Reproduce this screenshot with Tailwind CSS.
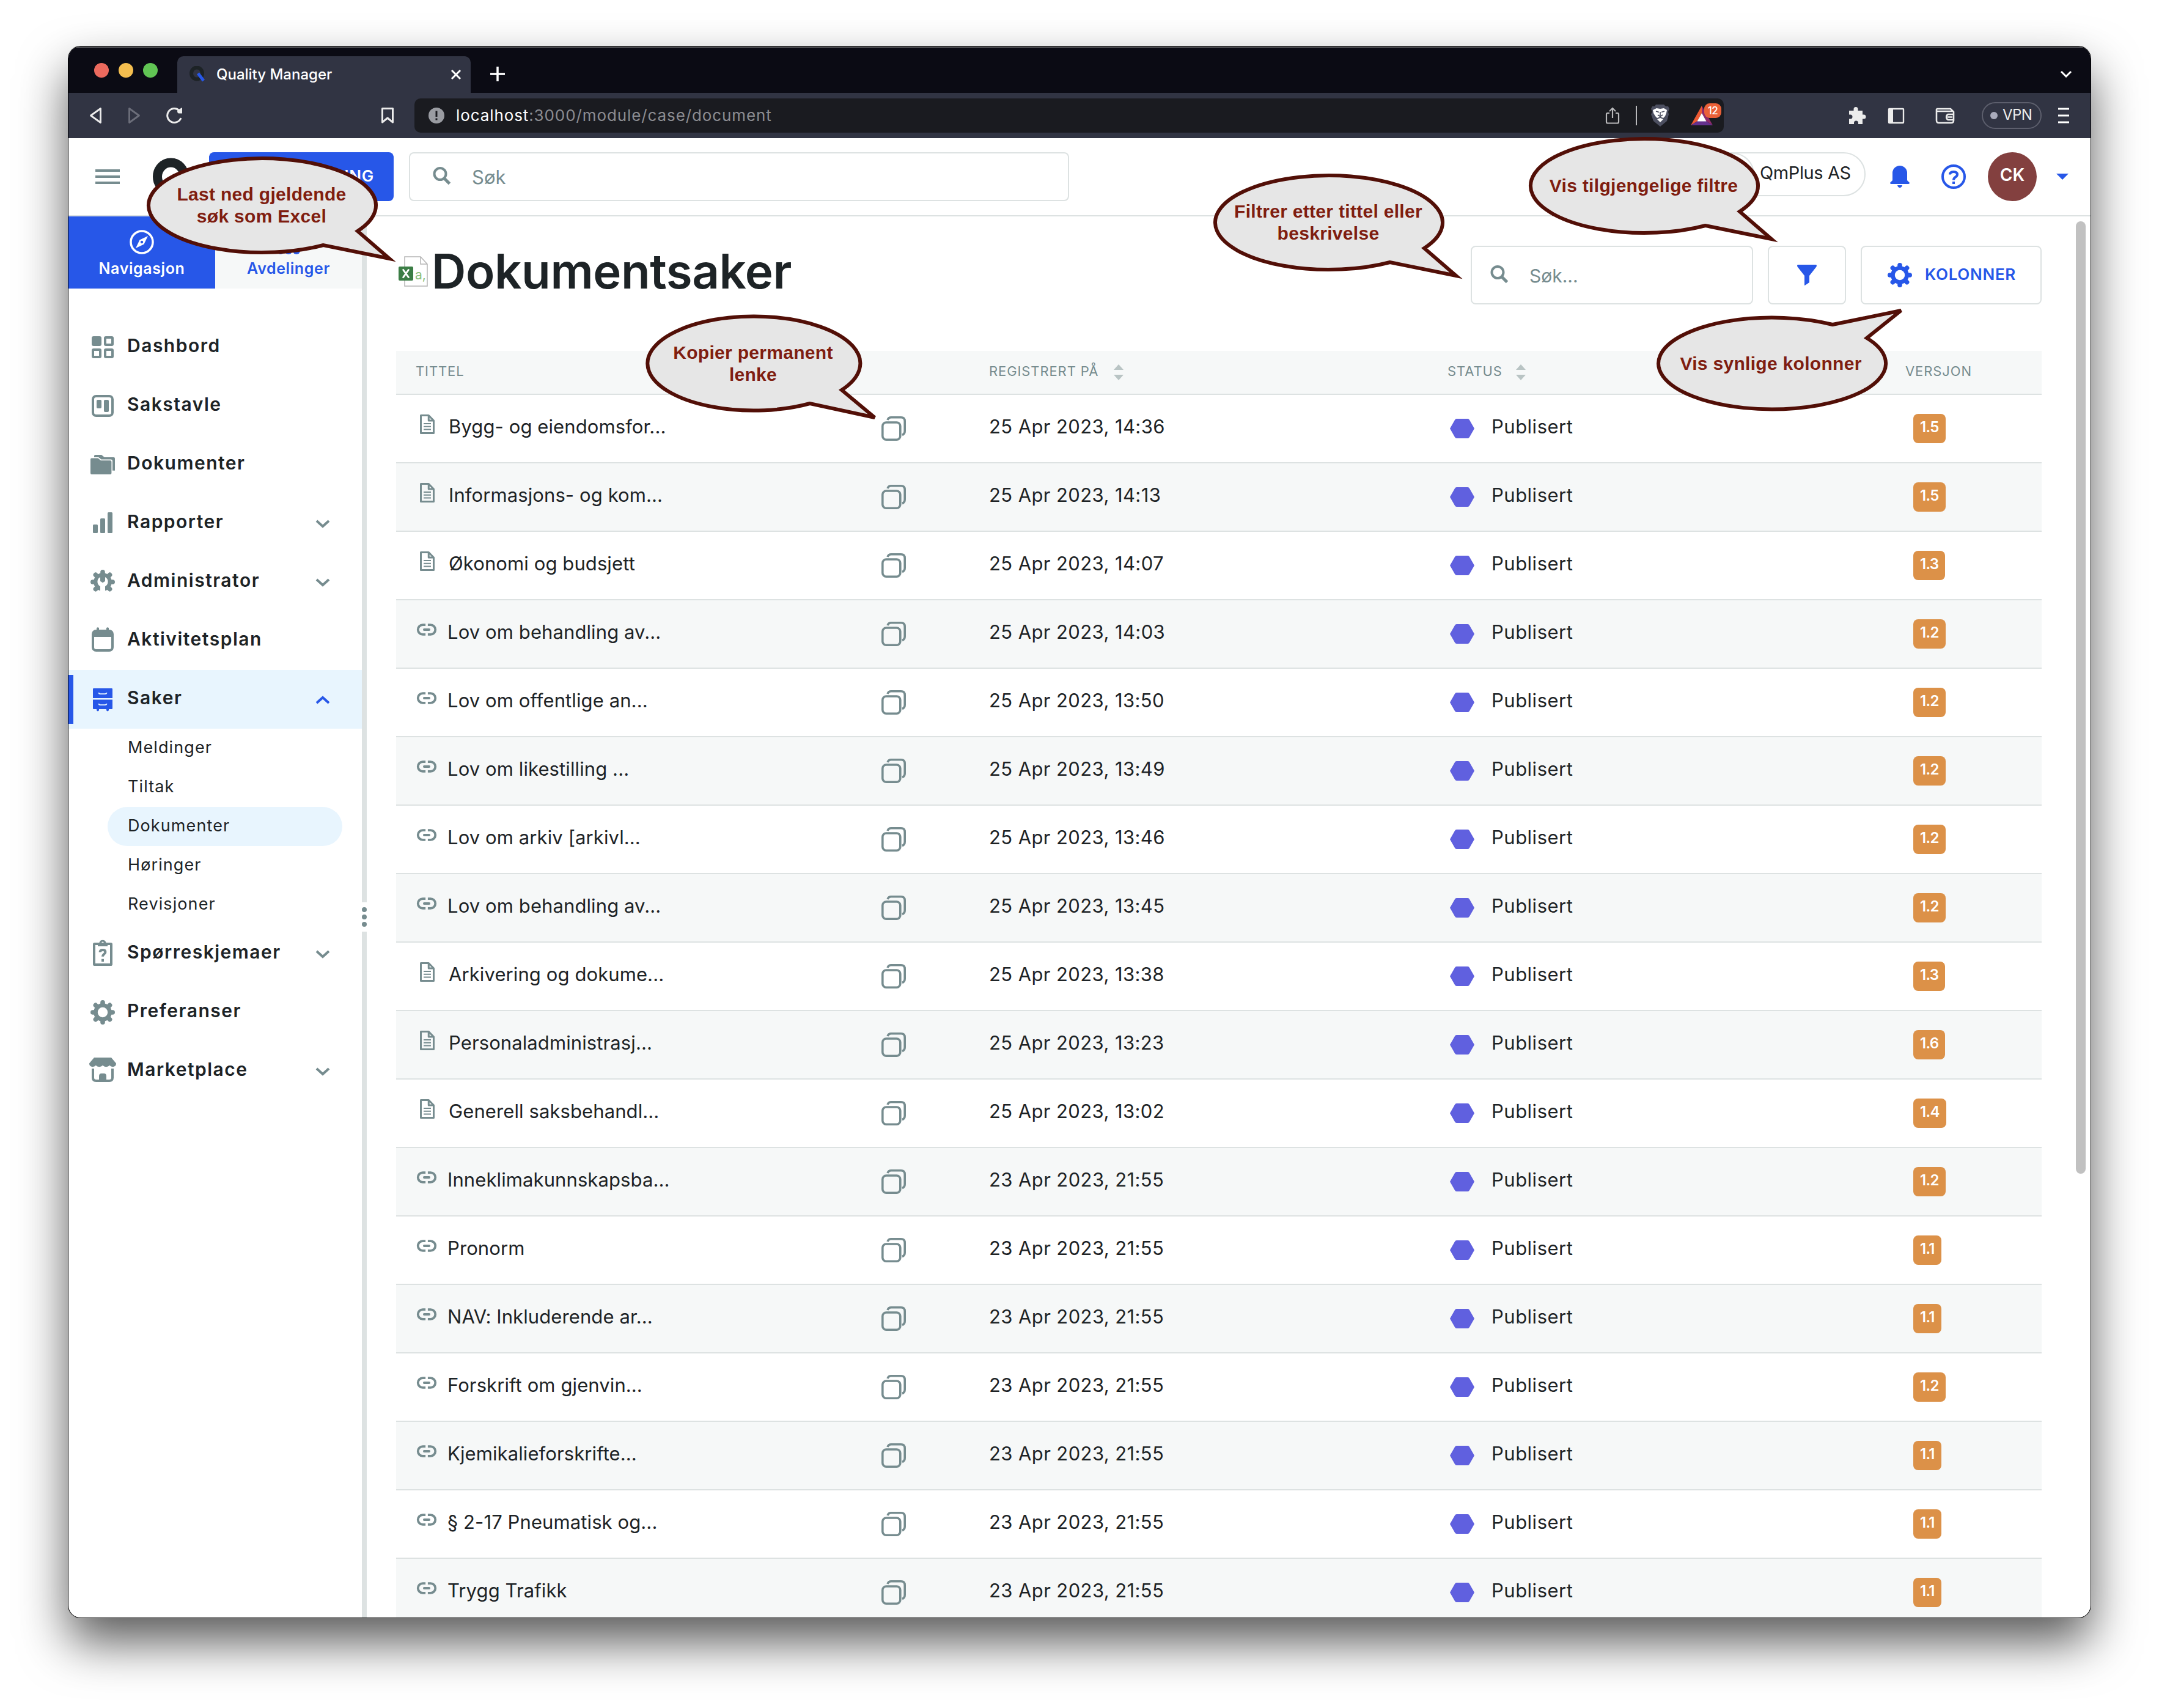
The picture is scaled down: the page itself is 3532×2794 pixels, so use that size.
<!DOCTYPE html>
<html lang="no">
<head>
  <meta charset="UTF-8" />
  <meta name="viewport" content="width=device-width, initial-scale=1.0"/>
  <title>Quality Manager</title>
  <script src="https://cdn.jsdelivr.net/npm/@tailwindcss/browser@4"></script>
</head>
<body class="bg-white font-['Inter',sans-serif] text-[#1d2326]">
  <!-- Icons -->
  <svg class="absolute size-0">
    <mask id="gearHole" maskUnits="userSpaceOnUse" x="0" y="0" width="24" height="24"><rect width="24" height="24" fill="white"/><circle cx="12" cy="12" r="4.1" fill="black"/></mask>
    <mask id="wrenchHole" maskUnits="userSpaceOnUse" x="0" y="0" width="24" height="24">
      <rect width="24" height="24" fill="white"/>
      <path d="M10 24V15.6A4.3 4.3 0 0 1 10 8V11.400L12 12.600L14 11.400V8A4.300 4.300 0 0 1 14 15.600V24Z" fill="black"/>
    </mask>
    <symbol id="gear" viewBox="0 0 24 24">
      <g mask="url(#gearHole)">
        <circle cx="12" cy="12" r="7.400" fill="currentColor"/>
        <path d="M12 3.900V20.100M3.900 12H20.100M6.200 6.200L17.800 17.800M17.800 6.200L6.200 17.800" stroke="currentColor" stroke-width="3.800" stroke-linecap="round"/>
      </g>
    </symbol>
    <symbol id="admin" viewBox="0 0 24 24">
      <g mask="url(#wrenchHole)">
        <circle cx="12" cy="12" r="7.400" fill="currentColor"/>
        <path d="M12 3.900V12M3.900 12H20.100M6.200 6.200L17.800 17.800M17.800 6.200L6.200 17.800" stroke="currentColor" stroke-width="3.800" stroke-linecap="round"/>
      </g>
    </symbol>
    <symbol id="dashboard" viewBox="0 0 24 24">
      <rect x="3" y="3" width="8" height="8" rx="1.6" fill="currentColor"/>
      <g fill="none" stroke="currentColor" stroke-width="2"><rect x="14" y="4" width="6" height="6" rx=".6"/><rect x="4" y="14" width="6" height="6" rx=".6"/><rect x="14" y="14" width="6" height="6" rx=".6"/></g>
    </symbol>
    <symbol id="board" viewBox="0 0 24 24">
      <rect x="4" y="4" width="16" height="16" rx="2.6" fill="none" stroke="currentColor" stroke-width="2"/>
      <rect x="7" y="7" width="4" height="7" rx="1" fill="currentColor"/><rect x="13" y="7" width="4" height="10" rx="1" fill="currentColor"/>
    </symbol>
    <symbol id="folders" viewBox="0 0 24 24" fill="currentColor">
      <path d="M3 6.8H8.2L10.4 8.6H18.2Q19.2 8.6 19.2 9.6V19Q19.2 20 18.2 20H3Q2 20 2 19V7.8Q2 6.8 3 6.8Z"/>
      <path d="M5 6V5Q5 4 6 4H11L13.4 6H21Q22 6 22 7V16.9H20V9.2Q20 7.8 18.6 7.8H10.8L8.6 6Z"/>
    </symbol>
    <symbol id="chart" viewBox="0 0 24 24" fill="currentColor"><rect x="4" y="13" width="4" height="7" rx=".8"/><rect x="10" y="8" width="4" height="12" rx=".8"/><rect x="16" y="3" width="4" height="17" rx=".8"/></symbol>
    <symbol id="calendar" viewBox="0 0 24 24">
      <rect x="4" y="4" width="16" height="16" rx="2.6" fill="none" stroke="currentColor" stroke-width="2"/>
      <path d="M4 4H20V9H4ZM7 1.6Q8 .6 9 1.6V4H7ZM15 1.6Q16 .6 17 1.6V4H15Z" fill="currentColor"/>
    </symbol>
    <symbol id="drawers" viewBox="0 0 24 24">
      <path d="M4.6 3H19.4Q20 3 20 3.6V11H4V3.6Q4 3 4.6 3ZM4 12.2H20V19.4Q20 20 19.4 20H17V21Q16 22.4 15 21V20H9V21Q8 22.4 7 21V20H4.6Q4 20 4 19.4Z" fill="currentColor"/>
      <path d="M8.6 6.6Q9 7.6 10 7.6H14Q15 7.6 15.4 6.6M8.6 15.6Q9 16.6 10 16.6H14Q15 16.6 15.4 15.6" fill="none" stroke="#e8f5fe" stroke-width=".9"/>
    </symbol>
    <symbol id="clipboard" viewBox="0 0 24 24">
      <rect x="5" y="4" width="14" height="17" rx=".4" fill="none" stroke="currentColor" stroke-width="2"/>
      <path d="M8 3H9.2A2.9 2.9 0 0 1 14.8 3H16V6H8ZM12 2.2A.9.9 0 1 0 12 4A.9.9 0 1 0 12 2.2Z" fill="currentColor" fill-rule="evenodd"/>
      <path d="M9.8 10.8Q9.8 9 12 9T14.2 10.7C14.2 12.3 12 12.2 12 14.4M12 16.4V18.6" fill="none" stroke="currentColor" stroke-width="2"/>
    </symbol>
    <symbol id="store" viewBox="0 0 24 24">
      <path d="M5 1H19L23 5.8Q23 8.4 20.4 8.6Q18.6 8.6 17.6 7.4Q16.6 8.6 14.8 8.6Q13 8.6 12 7.4Q11 8.6 9.2 8.6Q7.4 8.6 6.4 7.4Q5.4 8.6 3.6 8.6Q1 8.4 1 5.8Z" fill="currentColor"/>
      <path d="M4 10V17.4Q4 20 6.600 20H17.4Q20 20 20 17.4V10" fill="none" stroke="currentColor" stroke-width="2"/>
      <path d="M9 20V16.2Q9 14 11 14H13Q15 14 15 16.2V20Z" fill="currentColor"/>
    </symbol>
    <symbol id="chevron" viewBox="0 0 24 16"><path d="M2 3L12 12L22 3" fill="none" stroke="currentColor" stroke-width="4"/></symbol>
    <symbol id="doc" viewBox="0 0 24 24">
      <path d="M5 2.3H13.5L19 8V21.7H5ZM13.5 2.3V8H19" fill="none" stroke="currentColor" stroke-width="2" stroke-linejoin="round"/>
      <path d="M8 11.3H16M8 14.5H16M8 17.7H16" stroke="currentColor" stroke-width="1.4"/>
    </symbol>
    <symbol id="link" viewBox="0 0 24 24">
      <path d="M10.8 7H8A5 5 0 0 0 8 17H10.8M13.2 7H16A5 5 0 0 1 16 17H13.2" fill="none" stroke="currentColor" stroke-width="2.4"/>
      <path d="M9.4 12H14.6" stroke="currentColor" stroke-width="2.4" stroke-linecap="round"/>
    </symbol>
    <symbol id="copy" viewBox="0 0 40 40">
      <rect x="1.8" y="10" width="29" height="28.2" rx="6" fill="none" stroke="currentColor" stroke-width="3.6"/>
      <path d="M10 6Q11.5 1.8 16 1.8H32Q38.2 1.8 38.2 8V24Q38.2 29 34 30.5" fill="none" stroke="currentColor" stroke-width="3.6"/>
    </symbol>
    <symbol id="search" viewBox="0 0 30 30">
      <circle cx="12" cy="11.5" r="9.5" fill="none" stroke="currentColor" stroke-width="4"/>
      <path d="M18.5 18.5L27.5 27.5" stroke="currentColor" stroke-width="5"/>
    </symbol>
    <symbol id="sort" viewBox="0 0 16 26"><path d="M8 0L16 9H0ZM8 26L0 17H16Z" fill="#b9c4c4"/></symbol>
  </svg>

  <div class="relative w-[3532px] h-[2794px] overflow-hidden pt-[76px] pl-[112px]">
    <div class="flex flex-col w-[3308px] h-[2570px] rounded-[20px] overflow-hidden bg-white ring-1 ring-black shadow-[0_40px_80px_rgba(0,0,0,0.65)]">

      <!-- Tab bar -->
      <div class="flex items-center shrink-0 h-[76px] bg-[#0b0b14] pl-[42px] border-t-2 border-[#5c5c60]">
        <div class="flex gap-4">
          <div class="size-6 rounded-full bg-[#ec6a5e]"></div>
          <div class="size-6 rounded-full bg-[#f4be4f]"></div>
          <div class="size-6 rounded-full bg-[#61c554]"></div>
        </div>
        <div class="flex items-center self-end w-[480px] h-[60px] ml-8 pl-5 pr-3 bg-[#313443] rounded-t-[10px] text-white">
          <svg class="w-[26px] h-[28px]" viewBox="0 0 26 28"><ellipse cx="12" cy="12" rx="9" ry="9.5" fill="none" stroke="#1d2326" stroke-width="6"/><path d="M14 12L23 24" stroke="#2757e8" stroke-width="5"/></svg>
          <span class="ml-[18px] text-[24px] font-medium">Quality Manager</span>
          <svg class="ml-auto size-6" viewBox="0 0 24 24"><path d="M5 5L19 19M19 5L5 19" stroke="white" stroke-width="3"/></svg>
        </div>
        <svg class="ml-8 mt-3 size-6" viewBox="0 0 24 24"><path d="M12 0V24M0 12H24" stroke="white" stroke-width="3.5"/></svg>
        <svg class="ml-auto mr-[30px] mt-3 w-5 h-3" viewBox="0 0 20 12"><path d="M2 2L10 10L18 2" fill="none" stroke="white" stroke-width="3"/></svg>
      </div>

      <!-- Address bar -->
      <div class="flex items-center shrink-0 h-[74px] bg-[#313443] pl-[31px] text-[#ececec]">
        <svg class="size-7" viewBox="0 0 28 28"><path d="M21.5 2.5V25.5L5.5 14Z" fill="none" stroke="currentColor" stroke-width="2.8" stroke-linejoin="round"/></svg>
        <svg class="ml-[35px] size-7 text-[#6c6e7a]" viewBox="0 0 28 28"><path d="M5.5 2.5V25.5L21.5 14Z" fill="none" stroke="currentColor" stroke-width="2.8" stroke-linejoin="round"/></svg>
        <svg class="ml-[37px] size-7" viewBox="0 0 28 28"><path d="M25 18A11.5 11.5 0 1 1 22 5.5" fill="none" stroke="currentColor" stroke-width="3"/><path d="M27 1V10.5H21Q18 9 19.500 5Z" fill="currentColor"/></svg>
        <svg class="ml-[321px] size-7" viewBox="0 0 28 28"><path d="M5.5 2.5H22.5V25L14 18L5.5 25Z" fill="none" stroke="currentColor" stroke-width="3" stroke-linejoin="round"/></svg>
        <div class="flex items-center w-[2142px] h-[56px] ml-[30px] pl-[23px] pr-[18px] bg-[#1a1b20] rounded-[10px]">
          <svg class="size-[26px]" viewBox="0 0 26 26"><circle cx="13" cy="13" r="13" fill="#9a9ca2"/><path d="M13 5.5V15M13 17.5V20.5" stroke="#1a1b20" stroke-width="3"/></svg>
          <span class="ml-[19px] mb-[2px] text-[26px] tracking-[0.9px] text-[#8b8c91]"><span class="text-white">localhost</span>:3000/module/case/document</span>
          <svg class="ml-auto size-7" viewBox="0 0 28 28"><path d="M9 10H6Q4 10 4 12V24.5Q4 26.5 6 26.5H22Q24 26.5 24 24.5V12Q24 10 22 10H19M14 18V2M9 7L14 2L19 7" fill="none" stroke="#b9b9bb" stroke-width="2.2"/></svg>
          <div class="ml-6 w-[2px] h-8 bg-[#b9b9bb]"></div>
          <svg class="ml-[22px] w-8 h-9" viewBox="0 0 32 36">
            <path d="M9 0H22L25 3H29L31 7L29 12L30 16L27 27L16 36L5 27L1 16L3 12L1 7L3 3H7Z" fill="#4c4f60"/>
            <path d="M10 6L16 7L22 6L27 9L26 14L24 19L21 22L16 20L11 22L8 19L5 14L4 9Z" fill="white"/>
            <path d="M9 11L14 12.5M23 11L18 12.5M16 12V18M12 17L16 19.5L20 17" stroke="#4c4f60" stroke-width="1.6" fill="none"/>
            <path d="M11 24L16 22L21 24L16 29Z" fill="white"/>
          </svg>
          <div class="relative ml-[34px]">
            <svg class="w-9 h-8" viewBox="0 0 36 32"><path d="M18 0L0 32L11 25L18 12Z" fill="#ed5a33"/><path d="M18 0L36 32L25 25L18 12Z" fill="#902a6b"/><path d="M0 32H36L25 25H11Z" fill="#65318e"/><path d="M18 12L25.5 25.5H10.5Z" fill="white"/></svg>
            <div class="absolute left-[22px] top-[-4px] w-7 h-6 rounded-[9px] bg-[#ea6038] text-white text-[17px] leading-6 font-medium text-center tracking-[-0.5px]">12</div>
          </div>
        </div>
        <svg class="ml-[204px] w-[30px] h-[30px]" viewBox="0 0 30 30"><path d="M1 7H8.5V4.5A3.5 3.5 0 0 1 15.5 4.5V7H23V13.5H25A3.5 3.5 0 0 1 25 20.5H23V29H16V27A3.5 3.5 0 0 0 9 27V29H1V20.5H3A3.5 3.5 0 0 0 3 13.5H1Z" fill="currentColor"/></svg>
        <svg class="ml-[34px] size-7" viewBox="0 0 28 28"><rect x="2" y="3" width="24" height="23" rx="1" fill="none" stroke="currentColor" stroke-width="2.4"/><rect x="2" y="3" width="7" height="23" fill="currentColor"/></svg>
        <svg class="ml-[50px] w-8 h-7" viewBox="0 0 32 28"><path d="M3 3H25L30 8V22Q30 26 26 26H6Q2 26 2 22V4ZM3 7H28M30 12H21A5 5 0 0 0 21 21H30M20 16.5H28" fill="none" stroke="currentColor" stroke-width="2.6"/></svg>
        <div class="flex items-center w-[98px] h-[44px] ml-[44px] pl-[12px] rounded-full border-2 border-[#5d5f6d]">
          <div class="size-3 rounded-full bg-[#a9abbb]"></div>
          <span class="ml-[8px] mb-[2px] text-[24px] tracking-[-0.6px]">VPN</span>
        </div>
        <svg class="ml-[27px] w-[18px] h-[28px]" viewBox="0 0 18 28"><path d="M0 3H18M0 14H18M0 25H18" stroke="white" stroke-width="3"/></svg>
      </div>

      <!-- App header -->
      <div class="flex items-center shrink-0 h-[128px] pl-[44px] pr-[36px] border-b-2 border-[#dde2e2]">
        <svg class="w-10 h-6 text-[#768c8f]" viewBox="0 0 40 24"><path d="M0 2H40M0 12H40M0 22H40" stroke="currentColor" stroke-width="4"/></svg>
        <svg class="ml-[54px] w-[64px] h-[64px]" viewBox="0 0 64 64"><ellipse cx="29.5" cy="32" rx="22" ry="23" fill="none" stroke="#1d2326" stroke-width="15"/><path d="M34 32L54 60" stroke="#2757e8" stroke-width="12"/></svg>
        <div class="w-[302px] h-[80px] ml-[28px] pr-[32px] rounded-[8px] bg-[#2757e8] text-white text-[26px] leading-[78px] font-semibold tracking-[0.8px] text-right">NY MELDING</div>
        <div class="flex items-center w-[1080px] h-[80px] ml-[25px] pl-[37px] rounded-[8px] border-2 border-[#dde2e2] text-[#768c8f]">
          <svg class="size-[30px] mb-[2px]"><use href="#search"/></svg>
          <span class="ml-[34px] mt-[3px] text-[31px]">Søk</span>
        </div>
        <div class="flex items-center w-[480px] h-[72px] ml-auto mb-[8px] rounded-full border-2 border-[#dde2e2]">
          <div class="w-[296px] h-[70px] rounded-full border-2 border-[#dde2e2]"></div>
          <span class="ml-[9px] mb-[4px] text-[29px] tracking-[-0.4px]">QmPlus AS</span>
        </div>
        <svg class="ml-[40px] w-8 h-9 text-[#2757e8]" viewBox="0 0 32 36"><path d="M4 12A12 12 0 0 1 28 12V24L32 28Q32 30 30 30H2Q0 30 0 28L4 24ZM12 32H20Q19 36 16 36T12 32Z" fill="currentColor"/></svg>
        <svg class="ml-[52px] size-10 text-[#2757e8]" viewBox="0 0 40 40"><circle cx="20" cy="20" r="18" fill="none" stroke="currentColor" stroke-width="4"/><path d="M14 16.5Q14 12 20 12T26 16.5C26 21 20 20 20 25.5M20 28V32" fill="none" stroke="currentColor" stroke-width="4"/></svg>
        <div class="size-20 ml-[36px] rounded-full bg-[#83403f] text-white text-[28px] leading-[74px] font-semibold text-center">CK</div>
        <svg class="ml-[32px] w-5 h-[10px]" viewBox="0 0 20 10"><path d="M0 0H20L10 10Z" fill="#2757e8"/></svg>
      </div>

      <div class="flex flex-1 min-h-0">
        <!-- Sidebar -->
        <div class="w-[480px] shrink-0">
          <div class="flex h-[118px] text-[25px] font-semibold leading-[30px] tracking-[0.6px]">
            <div class="flex flex-col items-center w-1/2 pt-[22px] bg-[#2757e8] text-white">
              <svg class="size-10" viewBox="0 0 40 40"><circle cx="20" cy="20" r="18" fill="none" stroke="currentColor" stroke-width="3.5"/><path d="M30 10L23.5 23.5L10 30L16.5 16.5Z" fill="currentColor"/><circle cx="20" cy="20" r="2.2" fill="#2757e8"/></svg>
              <span class="mt-[8px]">Navigasjon</span>
            </div>
            <div class="flex flex-col items-center w-1/2 pt-[22px] bg-[#f6f8f8] text-[#2757e8]">
              <svg class="size-10" viewBox="0 0 40 40"><path d="M20 8V20M7 30V20H33V30M20 20V30" fill="none" stroke="currentColor" stroke-width="3"/><g fill="currentColor"><circle cx="20" cy="7" r="6"/><circle cx="7" cy="34" r="6"/><circle cx="20" cy="34" r="6"/><circle cx="33" cy="34" r="6"/></g></svg>
              <span class="mt-[8px]">Avdelinger</span>
            </div>
          </div>
          <div id="nav" class="pt-[48px]"></div>
        </div>
        <!-- Resize handle -->
        <div class="flex flex-col w-2 shrink-0">
          <div class="h-[1122px] bg-[#dde2e2]"></div>
          <div class="flex flex-col items-center justify-center gap-1 h-[48px]">
            <div class="size-2 rounded-full bg-[#768c8f]"></div>
            <div class="size-2 rounded-full bg-[#768c8f]"></div>
            <div class="size-2 rounded-full bg-[#768c8f]"></div>
          </div>
          <div class="flex-1 bg-[#dde2e2]"></div>
        </div>

        <!-- Main content -->
        <div class="w-[2692px] shrink-0 ml-[48px] pt-[48px]">
          <div class="flex items-center h-[96px]">
            <svg class="ml-[4px] mb-[12px] w-12 h-[50px]" viewBox="0 0 48 50">
              <path d="M10 1H36L47 13V49H10ZM36 1V13H47" fill="white" stroke="#b5b5b5" stroke-width="1.5"/>
              <rect y="17" width="24" height="23" rx="2" fill="#3b7d45"/>
              <path d="M7 21.5L17 35.5M17 21.5L7 35.5" stroke="white" stroke-width="3"/>
              <text x="27" y="38" font-size="21" fill="#8cc07c">a,</text>
            </svg>
            <h1 class="ml-[6px] mb-[12px] text-[78px] leading-[84px] font-semibold tracking-[-0.4px]">Dokumentsaker</h1>
            <div class="flex items-center w-[462px] h-[96px] ml-auto pl-[30px] rounded-[8px] border-2 border-[#dde2e2] text-[#768c8f]">
              <svg class="size-[30px] mb-[2px]"><use href="#search"/></svg>
              <span class="ml-[34px] mt-[2px] text-[30px]">Søk...</span>
            </div>
            <div class="flex items-center justify-center w-[128px] h-[96px] ml-6 rounded-[8px] border-2 border-[#dde2e2]">
              <svg class="w-8 h-[34px]" viewBox="0 0 32 34"><path d="M1 0H31Q33 1 31 4L20 18V29L12.5 34Q12 34 12 33V18L1 4Q-1 1 1 0Z" fill="#2757e8"/></svg>
            </div>
            <div class="flex items-center w-[296px] h-[96px] ml-6 pl-[38px] rounded-[8px] border-2 border-[#dde2e2] text-[#2757e8]">
              <svg class="size-[48px]"><use href="#gear"/></svg>
              <span class="ml-[17px] mb-[4px] text-[26px] font-semibold tracking-[0.7px]">KOLONNER</span>
            </div>
          </div>

          <div class="mt-[76px]">
            <div class="grid grid-cols-[938px_750px_749px_255px] items-center h-[72px] bg-[#f6f8f8] border-b-2 border-[#dde2e2] text-[22px] tracking-[0.9px] text-[#768c8f]">
              <div class="pl-8 mb-[4px]">TITTEL</div>
              <div class="flex items-center pl-8 mb-[4px]">REGISTRERT PÅ <svg class="ml-[25px] mt-[4px] w-4 h-[26px]"><use href="#sort"/></svg></div>
              <div class="flex items-center pl-8 mb-[4px]">STATUS <svg class="ml-[22px] mt-[4px] w-4 h-[26px]"><use href="#sort"/></svg></div>
              <div class="pl-8 mb-[4px]">VERSJON</div>
            </div>
            <div id="rows"></div>
          </div>
        </div>

        <!-- Scrollbar -->
        <div class="w-4 h-[1558px] ml-auto mr-2 mt-2 rounded-full bg-[#c1c1c1]"></div>
      </div>
    </div>

    <!-- Callouts -->
    <div class="text-[#7f1d10] text-[30px] leading-[36px] font-bold font-['Liberation_Sans',sans-serif] tracking-[0.3px] text-center">
      <div class="absolute left-[236px] top-[253px] flex items-center justify-center w-[384px] h-[166px]">
        <svg class="absolute inset-0 size-full overflow-visible" viewBox="-196 -83 384 166"><path d="M153 42L205 87L97 65A186 77 0 1 1 153 42Z" fill="#e6e6e6" stroke="#520f07" stroke-width="6"/></svg>
        <div class="relative">Last ned gjeldende<br>søk som Excel</div>
      </div>
      <div class="absolute left-[1981px] top-[281px] flex items-center justify-center w-[384px] h-[166px]">
        <svg class="absolute inset-0 size-full overflow-visible" viewBox="-196 -83 384 166"><path d="M153 42L205 87L97 65A186 77 0 1 1 153 42Z" fill="#e6e6e6" stroke="#520f07" stroke-width="6"/></svg>
        <div class="relative">Filtrer etter tittel eller<br>beskrivelse</div>
      </div>
      <div class="absolute left-[2497px] top-[221px] flex items-center justify-center w-[384px] h-[166px]">
        <svg class="absolute inset-0 size-full overflow-visible" viewBox="-196 -83 384 166"><path d="M153 42L205 87L97 65A186 77 0 1 1 153 42Z" fill="#e6e6e6" stroke="#520f07" stroke-width="6"/></svg>
        <div class="relative">Vis tilgjengelige filtre</div>
      </div>
      <div class="absolute left-[1052px] top-[512px] flex items-center justify-center w-[360px] h-[166px]">
        <svg class="absolute inset-0 size-full overflow-visible" viewBox="-183 -83 360 166"><path d="M142 43L196 88L90 65A174 77 0 1 1 142 43Z" fill="#e6e6e6" stroke="#520f07" stroke-width="6"/></svg>
        <div class="relative">Kopier permanent<br>lenke</div>
      </div>
      <div class="absolute left-[2705px] top-[512px] flex items-center justify-center w-[384px] h-[166px]">
        <svg class="absolute inset-0 size-full overflow-visible" viewBox="-196 -83 384 166"><path d="M97 -64L209 -87L153 -42A186 75 0 1 1 97 -64Z" fill="#e6e6e6" stroke="#520f07" stroke-width="6"/></svg>
        <div class="relative">Vis synlige kolonner</div>
      </div>
    </div>
  </div>

  <script>
    const nav = [
      { icon: "dashboard", label: "Dashbord" },
      { icon: "board", label: "Sakstavle" },
      { icon: "folders", label: "Dokumenter" },
      { icon: "chart", label: "Rapporter", more: true },
      { icon: "admin", label: "Administrator", more: true },
      { icon: "calendar", label: "Aktivitetsplan" },
      { icon: "drawers", label: "Saker", active: true, sub: ["Meldinger", "Tiltak", "Dokumenter", "Høringer", "Revisjoner"] },
      { icon: "clipboard", label: "Spørreskjemaer", more: true },
      { icon: "gear", label: "Preferanser" },
      { icon: "store", label: "Marketplace", more: true }
    ];

    document.getElementById("nav").innerHTML = nav.map(n => `
      <div class="flex items-center h-[96px] ${n.active ? "bg-[#e8f5fe]" : ""}">
        <div class="w-2 h-[80px] ${n.active ? "bg-[#2757e8]" : ""}"></div>
        <svg class="ml-6 size-12 ${n.active ? "text-[#2757e8]" : "text-[#768c8f]"}"><use href="#${n.icon}"/></svg>
        <span class="ml-[16px] mb-[5px] text-[30px] font-semibold tracking-[1.5px]">${n.label}</span>
        ${n.more || n.active ? `<svg class="ml-auto mr-[52px] mt-[2px] w-6 h-4 ${n.active ? "rotate-180 text-[#2757e8]" : "text-[#768c8f]"}"><use href="#chevron"/></svg>` : ""}
      </div>
      ${(n.sub || []).map(s => `
        <div class="h-[64px] ml-[64px] mr-8 pl-[33px] rounded-full text-[27px] leading-[62px] tracking-[1.1px] ${s === "Dokumenter" ? "bg-[#e8f5fe]" : ""}">${s}</div>
      `).join("")}
    `).join("");

    const rows = [
      ["doc", "Bygg- og eiendomsfor...", "25 Apr 2023, 14:36", "1.5"],
      ["doc", "Informasjons- og kom...", "25 Apr 2023, 14:13", "1.5"],
      ["doc", "Økonomi og budsjett", "25 Apr 2023, 14:07", "1.3"],
      ["link", "Lov om behandling av...", "25 Apr 2023, 14:03", "1.2"],
      ["link", "Lov om offentlige an...", "25 Apr 2023, 13:50", "1.2"],
      ["link", "Lov om likestilling ...", "25 Apr 2023, 13:49", "1.2"],
      ["link", "Lov om arkiv [arkivl...", "25 Apr 2023, 13:46", "1.2"],
      ["link", "Lov om behandling av...", "25 Apr 2023, 13:45", "1.2"],
      ["doc", "Arkivering og dokume...", "25 Apr 2023, 13:38", "1.3"],
      ["doc", "Personaladministrasj...", "25 Apr 2023, 13:23", "1.6"],
      ["doc", "Generell saksbehandl...", "25 Apr 2023, 13:02", "1.4"],
      ["link", "Inneklimakunnskapsba...", "23 Apr 2023, 21:55", "1.2"],
      ["link", "Pronorm", "23 Apr 2023, 21:55", "1.1"],
      ["link", "NAV: Inkluderende ar...", "23 Apr 2023, 21:55", "1.1"],
      ["link", "Forskrift om gjenvin...", "23 Apr 2023, 21:55", "1.2"],
      ["link", "Kjemikalieforskrifte...", "23 Apr 2023, 21:55", "1.1"],
      ["link", "§ 2-17 Pneumatisk og...", "23 Apr 2023, 21:55", "1.1"],
      ["link", "Trygg Trafikk", "23 Apr 2023, 21:55", "1.1"]
    ];

    document.getElementById("rows").innerHTML = rows.map(([icon, title, date, version]) => `
      <div class="grid grid-cols-[938px_750px_749px_255px] items-center h-[112px] border-b-2 border-[#dde2e2] even:bg-[#f6f8f8] text-[31px]">
        <div class="flex items-center pl-[31px] pr-[104px]">
          <svg class="mb-[14px] w-[38px] ${icon === "doc" ? "mx-[1px] h-[36px]" : "h-[38px]"} text-[#768c8f]"><use href="#${icon}"/></svg>
          <span class="ml-[15px] mb-[5px] tracking-[0.1px]">${title}</span>
          <svg class="ml-auto size-10 text-[#768c8f]"><use href="#copy"/></svg>
        </div>
        <div class="pl-8 mb-[5px] tracking-[0.4px]">${date}</div>
        <div class="flex items-center pl-[36px]">
          <svg class="w-10 h-8" viewBox="0 0 40 32"><path d="M11 0H29Q31 0 32 2L40 16L32 30Q31 32 29 32H11Q9 32 8 30L0 16L8 2Q9 0 11 0Z" fill="#6060df"/></svg>
          <span class="ml-[28px] mb-[5px] tracking-[0.5px]">Publisert</span>
        </div>
        <div class="flex pl-[45px]"><span class="h-[48px] px-[11px] rounded-[8px] bg-[#dc9148] text-white text-[24px] leading-[43px] font-semibold tracking-[-0.7px]">${version}</span></div>
      </div>
    `).join("");
  </script>
</body>
</html>
